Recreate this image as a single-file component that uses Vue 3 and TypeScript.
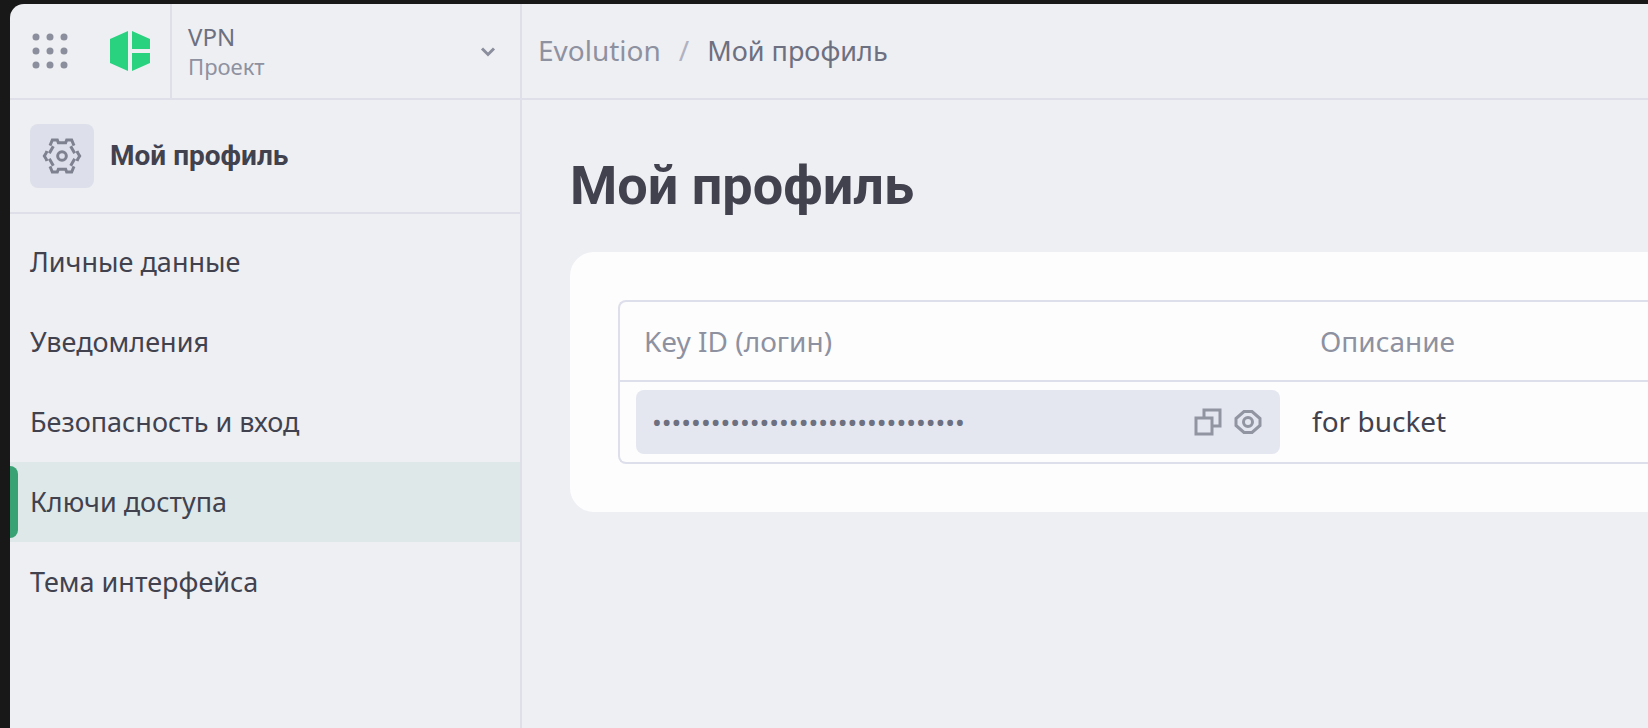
<script setup lang="ts">
import { ref, computed } from 'vue'

interface NavItem {
  id: string
  label: string
}

interface AccessKey {
  id: string
  secret: string
  description: string
}

const navItems: NavItem[] = [
  { id: 'personal', label: 'Личные данные' },
  { id: 'notifications', label: 'Уведомления' },
  { id: 'security', label: 'Безопасность и вход' },
  { id: 'keys', label: 'Ключи доступа' },
  { id: 'theme', label: 'Тема интерфейса' },
]

const active = ref('keys')

const keys: AccessKey[] = [
  { id: 'k1', secret: '0'.repeat(32), description: 'for bucket' },
]

const revealed = ref(false)
const inputType = computed(() => (revealed.value ? 'text' : 'password'))

const appDots = [0, 1, 2].flatMap((row) => [0, 1, 2].map((col) => ({ x: 4 + col * 14, y: 4 + row * 14 })))

function copy(value: string) {
  navigator.clipboard?.writeText(value)
}
</script>

<template>
  <div class="desktop">
    <div class="window">
      <header class="topbar">
        <div class="brand">
          <button class="icon-btn" type="button" aria-label="Сервисы">
            <svg width="36" height="36" viewBox="0 0 36 36">
              <circle v-for="(d, i) in appDots" :key="i" :cx="d.x" :cy="d.y" r="3.5" fill="#8b8f9d" />
            </svg>
          </button>
          <a class="logo" href="#" aria-label="Evolution">
            <svg width="40" height="40" viewBox="0 0 40 40" fill="#29d27f">
              <path d="M18 0v40L0 32V8z" />
              <path d="M22 0l18 8v10H22z" />
              <path d="M22 22h18v10l-18 8z" />
            </svg>
          </a>
        </div>
        <button class="project" type="button">
          <span class="project-text">
            <span class="project-name">VPN</span>
            <span class="project-kind">Проект</span>
          </span>
          <svg width="16" height="12" viewBox="0 0 16 12" fill="none" stroke="#8b8f9d" stroke-width="3">
            <path d="M2 3.500l6 6 6-6" />
          </svg>
        </button>
        <nav class="crumbs" aria-label="Навигация">
          <a class="crumb" href="#">Evolution</a>
          <span class="slash">/</span>
          <span class="crumb-current">Мой профиль</span>
        </nav>
      </header>

      <div class="body">
        <aside class="sidebar">
          <div class="section">
            <span class="section-icon">
              <svg width="40" height="40" viewBox="0 0 120 120" fill="none" stroke="#7e818f" stroke-width="9">
                <path d="M24 29L26 24L31 12H46L49 20H71L74 12H89L94 24L96 29" />
                <path d="M24 91L26 96L31 108H46L49 100H71L74 108H89L94 96L96 91" />
                <path d="M15 45L13 50L7 60L13 70L15 75" />
                <path d="M105 45L107 50L113 60L107 70L105 75" />
                <path d="M34 31L22 52M34 89L22 68M86 31L98 52M86 89L98 68" />
                <circle cx="60" cy="60" r="13" />
              </svg>
            </span>
            <span class="section-title">Мой профиль</span>
          </div>
          <nav class="menu" aria-label="Профиль">
            <a
              v-for="item in navItems"
              :key="item.id"
              href="#"
              class="menu-item"
              :class="{ active: item.id === active }"
              @click.prevent="active = item.id"
              >{{ item.label }}</a
            >
          </nav>
        </aside>

        <main class="content">
          <h1>Мой профиль</h1>
          <section class="card">
            <table class="keys">
              <colgroup>
                <col class="col-key" />
                <col />
              </colgroup>
              <thead>
                <tr>
                  <th scope="col">Key ID (логин)</th>
                  <th scope="col">Описание</th>
                </tr>
              </thead>
              <tbody>
                <tr v-for="k in keys" :key="k.id">
                  <td>
                    <div class="field">
                      <input :type="inputType" :value="k.secret" readonly aria-label="Key ID (логин)" />
                      <button class="icon-btn" type="button" aria-label="Копировать" @click="copy(k.secret)">
                        <svg width="28" height="28" viewBox="0 0 28 28" fill="none" stroke="#9194a1" stroke-width="3">
                          <path d="M10 9V2h16v16h-7" />
                          <path d="M2 10h16v16H2z" />
                        </svg>
                      </button>
                      <button class="icon-btn" type="button" aria-label="Показать" @click="revealed = !revealed">
                        <svg width="28" height="28" viewBox="0 0 28 28" fill="none" stroke="#9194a1" stroke-width="3">
                          <path d="M10 3.500h8l8 7v7l-8 7h-8l-8-7v-7z" />
                          <circle cx="14" cy="14" r="4.500" />
                        </svg>
                      </button>
                    </div>
                  </td>
                  <td class="description">{{ k.description }}</td>
                </tr>
              </tbody>
            </table>
          </section>
        </main>
      </div>
    </div>
  </div>
</template>

<style>
body {
  margin: 0;
}
</style>

<style scoped>
.desktop {
  box-sizing: border-box;
  display: flex;
  min-height: 100vh;
  padding: 4px 0 0 10px;
  background: #171817;
  color: #41424e;
  font-family: 'Noto Sans', 'Open Sans', sans-serif;
  font-size: 28px;
  line-height: 40px;
}

.window {
  flex: 1;
  display: flex;
  flex-direction: column;
  min-width: 0;
  border-top-left-radius: 14px;
  background: #eeeff3;
  overflow: hidden;
}

a {
  color: inherit;
  text-decoration: none;
}

button {
  padding: 0;
  border: 0;
  background: none;
  color: inherit;
  font: inherit;
  cursor: pointer;
}

svg {
  display: block;
}

.topbar {
  display: flex;
  height: 94px;
  border-bottom: 2px solid #dfdfea;
}

.brand {
  box-sizing: border-box;
  display: flex;
  align-items: center;
  gap: 42px;
  width: 162px;
  padding-left: 22px;
  border-right: 2px solid #dfdfea;
}

.project {
  box-sizing: border-box;
  display: flex;
  align-items: center;
  justify-content: space-between;
  width: 350px;
  padding: 0 24px 0 16px;
  border-right: 2px solid #dfdfea;
  text-align: left;
}

.project-text {
  display: flex;
  flex-direction: column;
}

.project-name {
  color: #6d7080;
  font-size: 24px;
  line-height: 30px;
}

.project-kind {
  color: #8e91a0;
  font-size: 22px;
  line-height: 28px;
}

.crumbs {
  display: flex;
  align-items: baseline;
  gap: 18px;
  padding: 26px 0 0 16px;
}

.crumb {
  color: #8e91a0;
}

.slash {
  color: #b0b2c2;
}

.crumb-current {
  color: #6d7080;
  font-size: 27px;
}

.body {
  flex: 1;
  display: flex;
}

.sidebar {
  box-sizing: border-box;
  width: 512px;
  border-right: 2px solid #dfdfea;
}

.section {
  display: flex;
  align-items: center;
  gap: 16px;
  height: 112px;
  padding-left: 20px;
  border-bottom: 2px solid #dfdfea;
}

.section-icon {
  display: grid;
  place-items: center;
  width: 64px;
  height: 64px;
  border-radius: 8px;
  background: #dddfea;
}

.section-title {
  font-family: Roboto, 'Noto Sans', sans-serif;
  font-weight: 700;
}

.menu {
  display: flex;
  flex-direction: column;
  padding-top: 8px;
  font-size: 27px;
}

.menu-item {
  position: relative;
  padding: 20px;
}

.menu-item.active {
  background: #dfe8e9;
}

.menu-item.active::before {
  content: '';
  position: absolute;
  top: 4px;
  bottom: 4px;
  left: 0;
  width: 8px;
  border-radius: 0 8px 8px 0;
  background: #39a275;
}

.content {
  flex: 1;
  min-width: 0;
  padding: 48px 0 0 48px;
}

h1 {
  margin: 0 0 28px;
  font-family: Roboto, 'Noto Sans', sans-serif;
  font-size: 54px;
  line-height: 76px;
  font-weight: 700;
}

.card {
  padding: 48px 0 48px 48px;
  border-radius: 24px 0 0 24px;
  background: #fdfdfe;
}

.keys {
  width: 100%;
  border: 2px solid #dddfea;
  border-right: 0;
  border-radius: 8px 0 0 8px;
  border-spacing: 0;
  table-layout: fixed;
}

.col-key {
  width: 676px;
}

th {
  padding: 19px 24px;
  border-bottom: 2px solid #dddfea;
  color: #8e91a0;
  font-weight: 400;
  text-align: left;
}

td {
  padding: 8px 16px;
}

td.description {
  padding-bottom: 10px;
}

.field {
  display: flex;
  align-items: center;
  gap: 12px;
  height: 64px;
  padding: 0 18px 0 16px;
  border-radius: 8px;
  background: #e4e7f0;
}

input {
  flex: 1;
  min-width: 0;
  padding: 0;
  border: 0;
  outline: 0;
  background: none;
  color: #6d7080;
  font-family: 'Noto Sans', sans-serif;
  font-size: 26px;
}
</style>
